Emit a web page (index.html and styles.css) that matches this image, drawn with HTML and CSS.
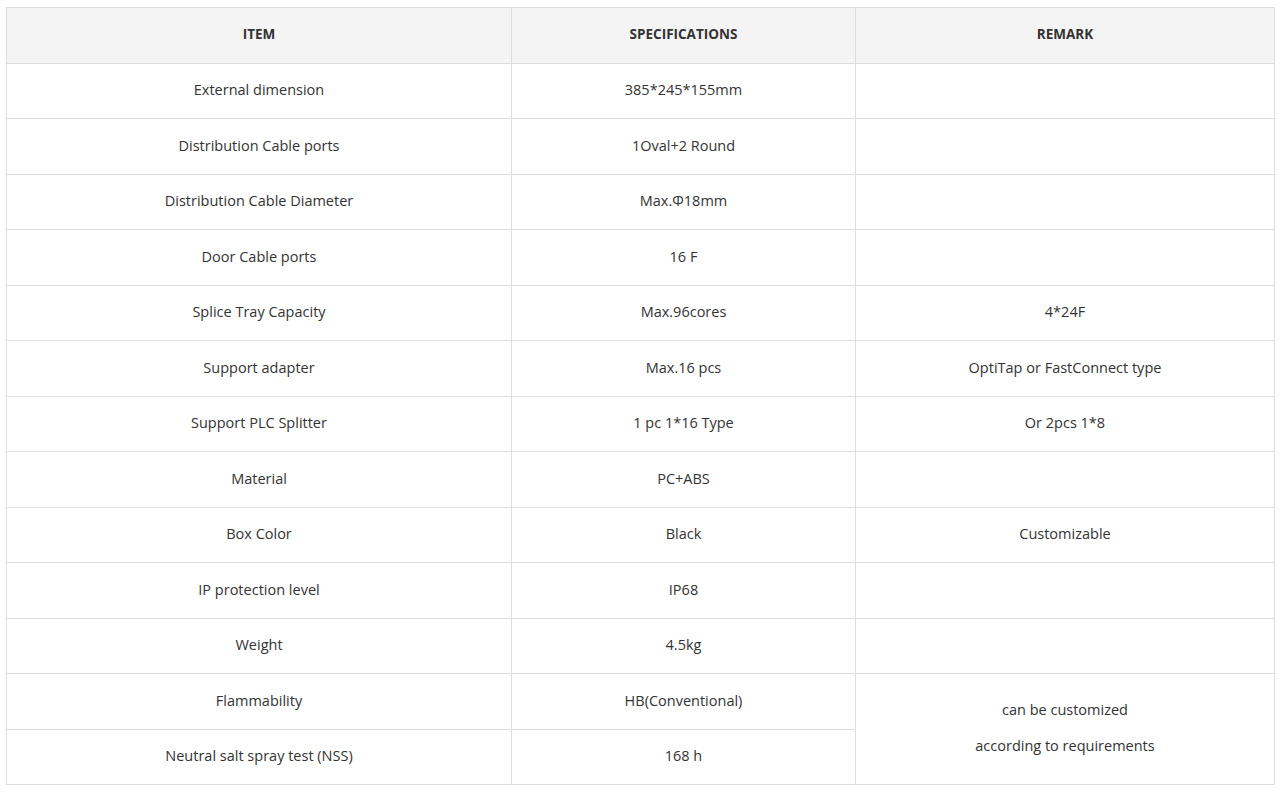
FILE: index.html
```html
<!DOCTYPE html>
<html lang="en">
<head>
<meta charset="utf-8">
<title>Specifications</title>
<link rel="stylesheet" href="styles.css">
</head>
<body>
<table class="spec">
  <colgroup>
    <col class="c1"><col class="c2"><col class="c3">
  </colgroup>
  <thead>
    <tr><th>ITEM</th><th>SPECIFICATIONS</th><th>REMARK</th></tr>
  </thead>
  <tbody>
    <tr><td>External dimension</td><td>385*245*155mm</td><td></td></tr>
    <tr><td>Distribution Cable ports</td><td>1Oval+2 Round</td><td></td></tr>
    <tr><td>Distribution Cable Diameter</td><td>Max.Φ18mm</td><td></td></tr>
    <tr><td>Door Cable ports</td><td>16 F</td><td></td></tr>
    <tr><td>Splice Tray Capacity</td><td>Max.96cores</td><td>4*24F</td></tr>
    <tr><td>Support adapter</td><td>Max.16 pcs</td><td>OptiTap or FastConnect type</td></tr>
    <tr><td>Support PLC Splitter</td><td>1 pc 1*16 Type</td><td>Or 2pcs 1*8</td></tr>
    <tr><td>Material</td><td>PC+ABS</td><td></td></tr>
    <tr><td>Box Color</td><td>Black</td><td>Customizable</td></tr>
    <tr><td>IP protection level</td><td>IP68</td><td></td></tr>
    <tr><td>Weight</td><td>4.5kg</td><td></td></tr>
    <tr><td>Flammability</td><td>HB(Conventional)</td><td rowspan="2"><div class="line">can be customized</div><div class="line">according to requirements</div></td></tr>
    <tr><td>Neutral salt spray test (NSS)</td><td>168 h</td></tr>
  </tbody>
</table>
</body>
</html>
```
FILE: styles.css
```css
html, body {
  margin: 0;
  padding: 0;
  background: #ffffff;
}
body {
  padding: 7px 6px;
  font-family: "Open Sans", "Noto Sans", sans-serif;
  font-size: 14.5px;
  color: #333333;
}
.spec {
  border-collapse: collapse;
  width: 1268px;
  table-layout: fixed;
}
.c1 { width: 505px; }
.c2 { width: 344px; }
.c3 { width: 419px; }
.spec th, .spec td {
  border: 1px solid #dddddd;
  text-align: center;
  vertical-align: middle;
  padding: 0 8px 2px;
}
.spec thead tr { height: 55.55px; }
.spec tbody tr { height: 55.5px; }
.spec th {
  background: #f4f4f4;
  font-weight: 700;
  font-size: 13.5px;
  color: #333333;
  padding-bottom: 3px;
}
.line {
  line-height: 36px;
}
```
